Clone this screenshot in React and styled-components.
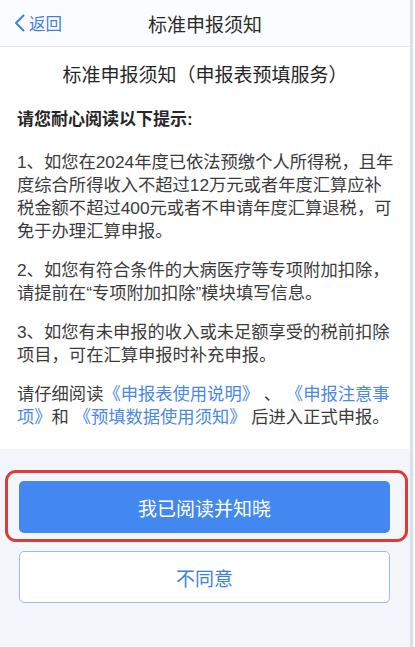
import React from 'react';
import styled, {createGlobalStyle} from 'styled-components';

const GlobalStyle = createGlobalStyle`
  html, body {
    margin: 0;
    padding: 0;
    background: #ffffff;
  }
  body {
    font-family: "Liberation Sans", "Noto Sans CJK SC", sans-serif;
  }
  * {
    box-sizing: border-box;
  }
`;

const tips = [
  ['1、如您在2024年度已依法预缴个人所得税，且年', '度综合所得收入不超过12万元或者年度汇算应补', '税金额不超过400元或者不申请年度汇算退税，可', '免于办理汇算申报。'],
  ['2、如您有符合条件的大病医疗等专项附加扣除，', '请提前在“专项附加扣除”模块填写信息。'],
  ['3、如您有未申报的收入或未足额享受的税前扣除', '项目，可在汇算申报时补充申报。'],
];

const App = () => {
  return (
    <>
      <GlobalStyle />
      <Screen>
        <Page>
          <NavBar>
            <BackButton>
              <svg width="11" height="18" viewBox="0 0 11 18">
                <polyline points="9.5,1.5 2,9 9.5,16.5" fill="none" stroke="#3f80da" strokeWidth="2" strokeLinecap="round" strokeLinejoin="round" />
              </svg>
              <span>返回</span>
            </BackButton>
            <NavTitle>标准申报须知</NavTitle>
          </NavBar>

          <Notice>
            <Heading>标准申报须知（申报表预填服务）</Heading>
            <Lead>请您耐心阅读以下提示:</Lead>
            {tips.map((lines, i) => (
              <Para key={i}>
                {lines.map((line, j) => (
                  <React.Fragment key={j}>
                    {line}
                    {j < lines.length - 1 && <br />}
                  </React.Fragment>
                ))}
              </Para>
            ))}
            <Para>
              请仔细阅读<DocLink>《申报表使用说明》</DocLink> 、 <DocLink>《申报注意事<br />项》</DocLink>和 <DocLink>《预填数据使用须知》</DocLink> 后进入正式申报。
            </Para>
          </Notice>

          <Actions>
            <PrimaryButton>我已阅读并知晓</PrimaryButton>
            <GhostButton>不同意</GhostButton>
          </Actions>
        </Page>
      </Screen>
    </>
  );
};

export default App;

const Screen = styled.div`
  display: flex;
  min-height: 100vh;
  background: #ffffff;
`;

const Page = styled.div`
  width: 413px;
  min-height: 100vh;
  display: flex;
  flex-direction: column;
  background: #f3f6fa;
  border-right: 3px solid #d9e0ec;
`;

const NavBar = styled.header`
  position: relative;
  height: 47px;
  display: flex;
  align-items: center;
  justify-content: center;
  background: #fbfcfd;
  border-bottom: 1px solid #e3e6eb;
`;

const BackButton = styled.div`
  position: absolute;
  left: 14px;
  top: 0;
  bottom: 0;
  display: flex;
  align-items: center;
  gap: 4px;
  color: #3f80da;
  font-size: 16.5px;

  svg {
    display: block;
  }
`;

const NavTitle = styled.h1`
  margin: 0;
  font-size: 19px;
  font-weight: 400;
  color: #2b2b2b;
`;

const Notice = styled.section`
  background: #ffffff;
  padding: 15px 6px 20px 17px;
  color: #3b3b3b;
`;

const Heading = styled.h2`
  margin: 0 11px 18px 0;
  font-size: 19px;
  line-height: 28px;
  font-weight: 400;
  text-align: center;
  color: #262626;
`;

const Lead = styled.p`
  margin: 0 0 20px;
  font-size: 17px;
  line-height: 23px;
  font-weight: 700;
  color: #262626;
`;

const Para = styled.p`
  margin: 0 0 16px;
  font-size: 17.3px;
  line-height: 23px;
  white-space: nowrap;

  &:last-child {
    margin-bottom: 0;
  }
`;

const DocLink = styled.span`
  color: #4a88e6;
`;

const Actions = styled.div`
  display: flex;
  flex-direction: column;
  gap: 18px;
  padding: 32px 20px 0 19px;
`;

const BaseButton = styled.button`
  width: 371px;
  height: 52px;
  border-radius: 5px;
  font-family: inherit;
  font-size: 19px;
  cursor: pointer;
`;

const PrimaryButton = styled(BaseButton)`
  position: relative;
  border: none;
  background: #4387f0;
  color: #ffffff;

  &::after {
    content: '';
    position: absolute;
    top: -11px;
    left: -14px;
    right: -18px;
    bottom: -9px;
    border: 3px solid #df3a36;
    border-radius: 11px;
    pointer-events: none;
  }
`;

const GhostButton = styled(BaseButton)`
  border: 1px solid #9dbbe0;
  background: #ffffff;
  color: #3f7fd8;
`;
